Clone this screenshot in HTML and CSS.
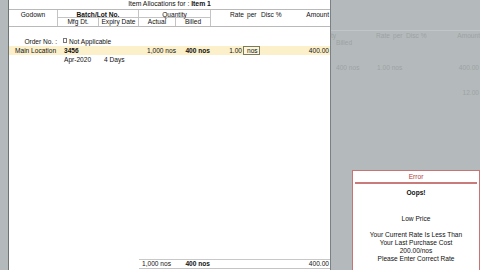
FILE: index.html
```html
<!DOCTYPE html>
<html>
<head>
<meta charset="utf-8">
<link rel="stylesheet" href="styles.css">
</head>
<body>
<div class="screen">
  <div class="gutter"></div>
  <div class="panel">
    <div class="title"><div class="title-in">Item Allocations for : <b>Item 1</b></div></div>
    <div class="head">
      <div class="hc h-godown">Godown</div>
      <div class="hgroup h-batch">
        <div class="hg-top">Batch/Lot No.</div>
        <div class="hg-bot">
          <div class="hs h-mfg">Mfg Dt.</div>
          <div class="hs h-exp">Expiry Date</div>
        </div>
      </div>
      <div class="hgroup h-qty">
        <div class="hg-top">Quantity</div>
        <div class="hg-bot">
          <div class="hs h-act">Actual</div>
          <div class="hs h-bil">Billed</div>
        </div>
      </div>
      <div class="h-rest">
        <div class="c-rate r">Rate</div>
        <div class="c-per h-per">per</div>
        <div class="c-disc h-disc">Disc %</div>
        <div class="c-amt r">Amount</div>
      </div>
    </div>

    <div class="row order-row">
      <div class="c-godown r">Order No. :</div>
      <div class="c-rest2"><span class="chk"></span>Not Applicable</div>
    </div>
    <div class="row hl">
      <div class="c-godown pl">Main Location</div>
      <div class="c-mfg pl"><b>3456</b></div>
      <div class="c-exp"></div>
      <div class="c-act r">1,000 nos</div>
      <div class="c-bil r"><b>400 nos</b></div>
      <div class="c-rate r pr">1.00</div>
      <div class="c-per"><span class="unit">nos</span></div>
      <div class="c-disc"></div>
      <div class="c-amt r">400.00</div>
    </div>
    <div class="row">
      <div class="c-godown"></div>
      <div class="c-mfg pl">Apr-2020</div>
      <div class="c-exp pl2">4 Days</div>
    </div>

    <div class="spacer"></div>

    <div class="foot">
      <div class="f-act">1,000 nos</div>
      <div class="c-bil r"><b>400 nos</b></div>
      <div class="f-mid"></div>
      <div class="c-amt r">400.00</div>
    </div>
  </div>

  <div class="behind">
    <div class="b-row b-r1">
      <div class="b-ty">ty</div>
      <div class="b-rate">Rate</div>
      <div class="b-per">per</div>
      <div class="b-disc">Disc %</div>
      <div class="b-amt">Amount</div>
    </div>
    <div class="b-row b-r2">Billed</div>
    <div class="b-row b-r3">
      <div class="b-qty">400 nos</div>
      <div class="b-rt">1.00 nos</div>
      <div class="b-fill"></div>
      <div>400.00</div>
    </div>
    <div class="b-row b-r4">12.00</div>

    <div class="error">
      <div class="err-title">Error</div>
      <div class="err-rule"></div>
      <div class="err-oops">Oops!</div>
      <div class="err-low">Low Price</div>
      <div class="err-msg">Your Current Rate Is Less Than<br>Your Last Purchase Cost<br>200.00/nos<br>Please Enter Correct Rate</div>
    </div>
  </div>
</div>
</body>
</html>
```
FILE: styles.css
```css
* { box-sizing: border-box; }
html, body { margin: 0; padding: 0; }
body {
  background: #b4babb;
  font-family: "Liberation Sans", Arial, sans-serif;
  font-size: 6.6px;
  color: #111;
  width: 480px;
  height: 270px;
  overflow: hidden;
}
.screen {
  display: flex;
  width: 480px;
  height: 270px;
  overflow: hidden;
}
.gutter { width: 8px; flex: none; }
.panel {
  width: 323px;
  flex: none;
  background: #fff;
  border-left: 1px solid #6e7374;
  border-right: 1px solid #7b8081;
  display: flex;
  flex-direction: column;
}
.title {
  height: 9px;
  overflow: hidden;
  text-align: center;
  font-size: 6.8px;
}
.title-in { line-height: 9px; margin-top: -1px; }

.head {
  display: flex;
  border-top: 1px solid #b9b9b9;
  border-bottom: 1px solid #b9b9b9;
  height: 18px;
  line-height: 7px;
}
.hc, .hgroup { border-right: 1px solid #c4c4c4; }
.h-godown { width: 49px; text-align: center; padding-top: 1px; }
.h-batch { width: 81px; }
.h-qty { width: 72px; }
.hg-top {
  height: 8px;
  text-align: center;
  border-bottom: 1px solid #c4c4c4;
  padding-top: 1px;
  color: #111;
}
.h-batch .hg-top { font-weight: bold; }
.hg-bot { display: flex; height: 8px; line-height: 8px; }
.hs { text-align: center; }
.h-mfg { width: 41px; border-right: 1px solid #c4c4c4; }
.h-exp { flex: 1; }
.h-act { width: 37px; border-right: 1px solid #c4c4c4; }
.h-bil { flex: 1; }
.h-rest { display: flex; flex: 1; padding-top: 1px; }
.h-rest .c-amt { padding-right: 1px; }
.h-per { padding-left: 3px; }
.h-disc { padding-left: 1px; }

.row { display: flex; height: 9px; line-height: 9px; white-space: nowrap; }
.order-row { margin-top: 10px; }
.hl { background: #fcf0cb; }
.c-godown { width: 49px; flex: none; }
.c-mfg { width: 41px; flex: none; }
.c-exp { width: 40px; flex: none; }
.c-act { width: 37px; flex: none; }
.c-bil { width: 35px; flex: none; padding-right: 1px; }
.c-rate { width: 33px; flex: none; }
.c-per { width: 16px; flex: none; }
.c-disc { width: 22px; flex: none; }
.c-amt { width: 48px; flex: none; padding-right: 1px; }
.c-rest2 { padding-left: 5px; display: flex; align-items: center; }
.r { text-align: right; }
.pl { padding-left: 6px; }
.pl2 { padding-left: 5px; }
.pr { padding-right: 2px; }
.order-row .c-godown { padding-right: 1px; }
.chk {
  display: inline-block;
  width: 4px;
  height: 5px;
  border: 1px solid #777;
  margin-right: 2px;
  margin-top: -2px;
}
.unit {
  display: block;
  height: 9px;
  line-height: 7px;
  border: 1px solid #7b7b55;
  padding-left: 3px;
  margin-left: -1px;
  background: #fdf6dc;
}

.spacer { flex: 1; }
.foot {
  display: flex;
  margin-left: 130px;
  height: 10px;
  line-height: 8px;
  border-top: 1px solid #c8c8c8;
  border-bottom: 1px solid #c4c4c4;
  margin-bottom: 1px;
  white-space: nowrap;
}
.f-act { width: 37px; padding-left: 3px; }
.f-mid { width: 71px; }

.behind {
  flex: 1;
  position: relative;
  color: #9ca2a4;
  padding-top: 30px;
  white-space: nowrap;
}
.b-row { display: flex; height: 8px; line-height: 8px; }
.b-r1 { border-top: 1px solid #c1c7c8; height: 9px; padding-top: 1px; }
.b-ty { width: 45px; }
.b-rate { width: 17px; }
.b-per { width: 13px; }
.b-disc { width: 24px; }
.b-amt { flex: 1; text-align: right; }
.b-r2 { padding-left: 5px; }
.b-r3 { margin-top: 17px; padding-left: 5px; padding-right: 1px; }
.b-qty { width: 41px; }
.b-fill { flex: 1; }
.b-r4 { margin-top: 17px; justify-content: flex-end; padding-right: 1px; }

.error {
  position: absolute;
  left: 21px;
  top: 170px;
  width: 128px;
  height: 110px;
  background: #fff;
  border: 1px solid #c87474;
  color: #111;
  text-align: center;
  line-height: 8px;
}
.err-title { height: 11px; line-height: 11px; color: #b33a3a; }
.err-rule { height: 2px; background: #c97a7a; margin: 0 2px; }
.err-oops { font-weight: bold; margin-top: 5px; }
.err-low { margin-top: 18px; }
.err-msg { margin-top: 8px; }
```
